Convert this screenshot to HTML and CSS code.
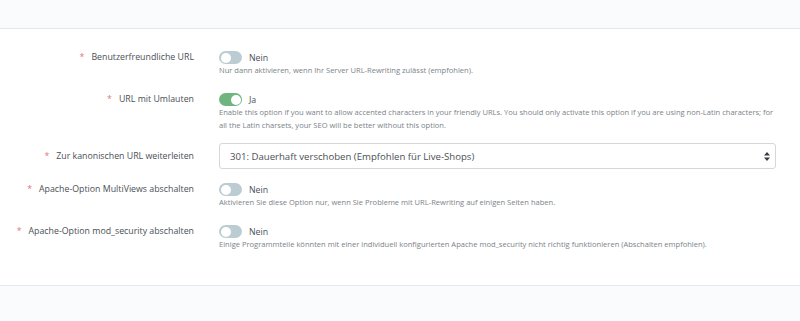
FILE: index.html
```html
<!DOCTYPE html>
<html lang="de">
<head>
  <meta charset="UTF-8">
  <meta name="viewport" content="width=device-width, initial-scale=1.0">
  <title>SEO &amp; URLs</title>
  <link rel="stylesheet" href="styles.css">
</head>
<body>
  <div class="band band-top"></div>

  <form class="settings">
    <div class="form-row">
      <label class="form-label"><span class="req">*</span>Benutzerfreundliche URL</label>
      <div class="form-control">
        <div class="switch-line">
          <span class="switch"></span>
          <span class="switch-text">Nein</span>
        </div>
        <p class="help">Nur dann aktivieren, wenn Ihr Server URL-Rewriting zulässt (empfohlen).</p>
      </div>
    </div>

    <div class="form-row">
      <label class="form-label"><span class="req">*</span>URL mit Umlauten</label>
      <div class="form-control">
        <div class="switch-line">
          <span class="switch on"></span>
          <span class="switch-text">Ja</span>
        </div>
        <p class="help">Enable this option if you want to allow accented characters in your friendly URLs. You should only activate this option if you are using non-Latin characters; for all the Latin charsets, your SEO will be better without this option.</p>
      </div>
    </div>

    <div class="form-row row-select">
      <label class="form-label"><span class="req">*</span>Zur kanonischen URL weiterleiten</label>
      <div class="form-control">
        <div class="select-wrap">
          <select class="select">
            <option>301: Dauerhaft verschoben (Empfohlen für Live-Shops)</option>
            <option>302: Vorübergehend verschoben</option>
            <option>Keine Weiterleitung</option>
          </select>
          <svg class="select-arrows" width="6" height="9" viewBox="0 0 6 9">
            <path d="M3 0 L6 3.5 H0 Z M3 9 L6 5.5 H0 Z" fill="#363a41"/>
          </svg>
        </div>
      </div>
    </div>

    <div class="form-row">
      <label class="form-label"><span class="req">*</span>Apache-Option MultiViews abschalten</label>
      <div class="form-control">
        <div class="switch-line">
          <span class="switch"></span>
          <span class="switch-text">Nein</span>
        </div>
        <p class="help">Aktivieren Sie diese Option nur, wenn Sie Probleme mit URL-Rewriting auf einigen Seiten haben.</p>
      </div>
    </div>

    <div class="form-row">
      <label class="form-label"><span class="req">*</span>Apache-Option mod_security abschalten</label>
      <div class="form-control">
        <div class="switch-line">
          <span class="switch"></span>
          <span class="switch-text">Nein</span>
        </div>
        <p class="help">Einige Programmteile könnten mit einer individuell konfigurierten Apache mod_security nicht richtig funktionieren (Abschalten empfohlen).</p>
      </div>
    </div>
  </form>

  <div class="band band-bottom"></div>
</body>
</html>
```

FILE: styles.css
```css
/* Page */
body {
  margin: 0;
  padding: 0;
  background-color: #fff;
  font-family: "Open Sans", "Liberation Sans", sans-serif;
  color: #4a4f55;
}
.band {
  background-color: #fafbfc;
}
.band-top {
  height: 28px;
  border-bottom: 1px solid #e4e7eb;
}
.band-bottom {
  height: 37px;
  border-top: 1px solid #e4e7eb;
}

/* Form layout */
.settings {
  padding: 22px 24px 34px 0;
}
.form-row {
  display: flex;
  margin-bottom: 16px;
}
.form-row:last-child {
  margin-bottom: 0;
}
.row-select {
  margin-top: -5px;
  margin-bottom: 14px;
  align-items: center;
}
.form-label {
  width: 194px;
  flex-shrink: 0;
  padding-right: 25px;
  text-align: right;
  font-size: 8.8px;
  line-height: 13px;
}
.req {
  color: #e0787e;
  margin-right: 7px;
}
.form-control {
  flex: 1;
}

/* Switch */
.switch-line {
  display: flex;
  align-items: center;
  height: 13px;
}
.switch {
  position: relative;
  width: 23px;
  height: 13px;
  border-radius: 7px;
  background-color: #bbcdd2;
}
.switch::after {
  content: "";
  position: absolute;
  top: 1.5px;
  left: 1.5px;
  width: 10px;
  height: 10px;
  border-radius: 50%;
  background-color: #fff;
}
.switch.on {
  background-color: #70b580;
}
.switch.on::after {
  left: 11.5px;
}
.switch-text {
  margin-left: 7px;
  font-size: 8.8px;
}

/* Help text */
.help {
  margin: 0;
  font-size: 7.55px;
  line-height: 13px;
  color: #7b8388;
}

/* Select */
.select-wrap {
  position: relative;
}
.select {
  display: block;
  width: 100%;
  height: 26px;
  padding: 0 10px;
  border: 1px solid #d3d8db;
  border-radius: 3px;
  background-color: #fff;
  font-family: inherit;
  font-size: 9.6px;
  color: #4a4f55;
  appearance: none;
  -webkit-appearance: none;
}
.select-arrows {
  position: absolute;
  right: 6px;
  top: 8.5px;
  pointer-events: none;
}
```
